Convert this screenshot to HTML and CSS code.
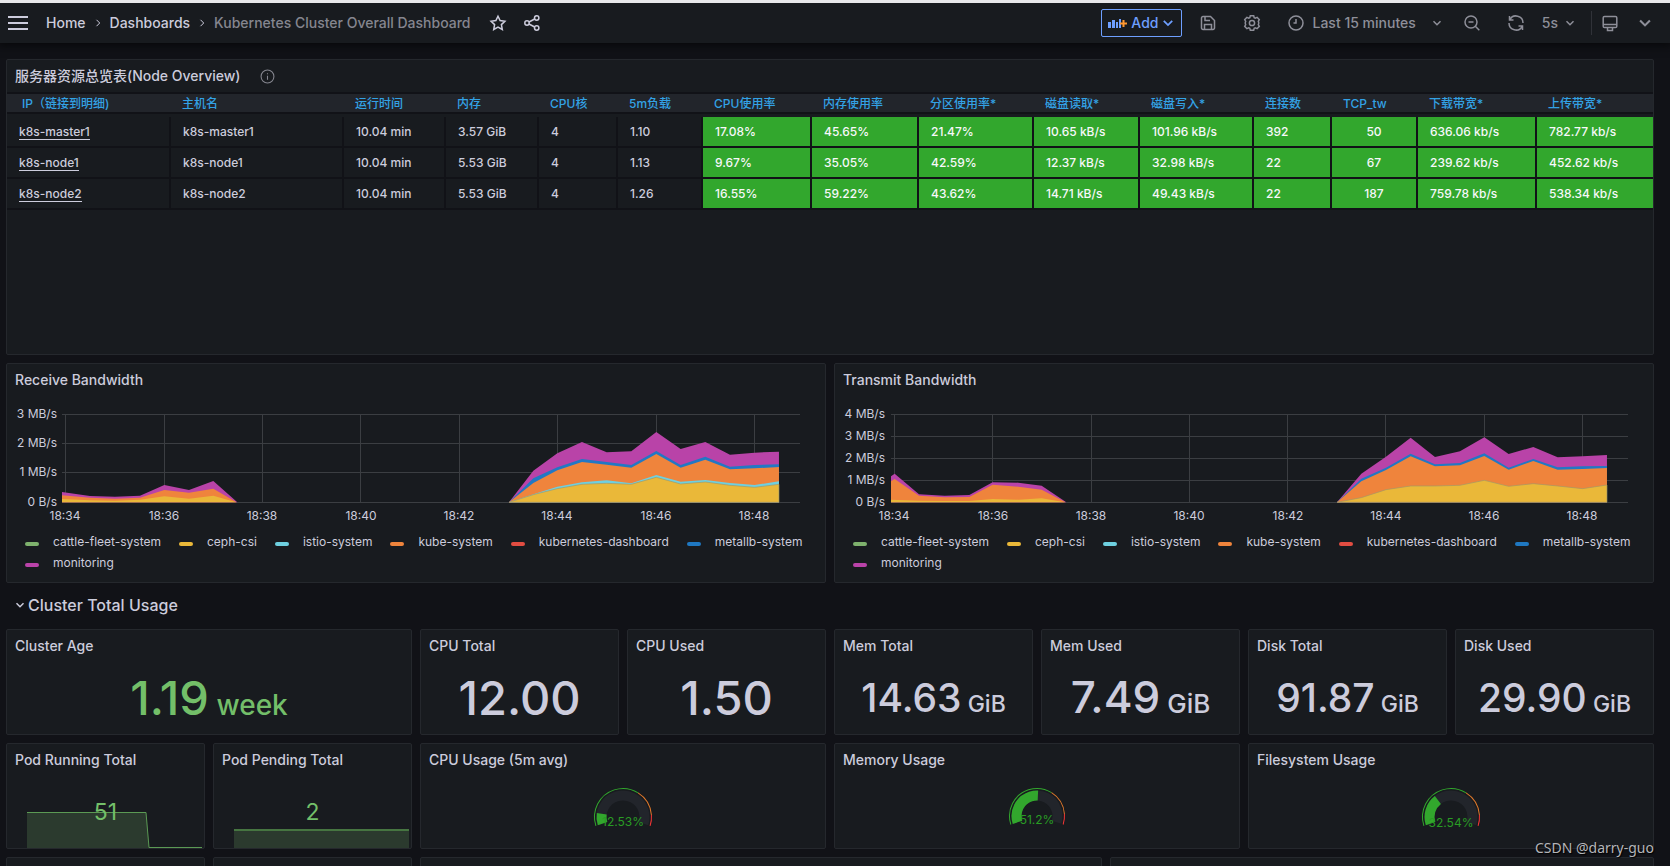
FILE: index.html
```html
<!DOCTYPE html>
<html lang="en">
<head>
<meta charset="utf-8">
<title>Kubernetes Cluster Overall Dashboard</title>
<link rel="stylesheet" href="styles.css">
</head>
<body>
<svg class="defs" aria-hidden="true">
  <symbol id="chev-down" viewBox="0 0 10 10"><path d="M1.5 3.2 5 6.7 8.5 3.2"/></symbol>
  <symbol id="chev-right" viewBox="0 0 10 10"><path d="M3.5 1.8 6.7 5 3.5 8.2"/></symbol>
</svg>
<div class="app">
<header class="topbar">
  <button class="icon-btn menu" aria-label="Menu"><svg width="20" height="16" viewBox="0 0 20 16"><path d="M0 2h20M0 8h20M0 14h20"/></svg></button>
  <nav class="crumbs">
    <a href="#">Home</a>
    <svg class="chev" width="10" height="10"><use href="#chev-right"/></svg>
    <a href="#">Dashboards</a>
    <svg class="chev" width="10" height="10"><use href="#chev-right"/></svg>
    <span class="current">Kubernetes Cluster Overall Dashboard</span>
  </nav>
  <button class="icon-btn light star" aria-label="Star"><svg width="18" height="18" viewBox="0 0 18 18"><path d="M9 2.2l2.1 4.4 4.8.6-3.5 3.4.9 4.9L9 13.1l-4.3 2.4.9-4.9L2.1 7.2l4.8-.6z"/></svg></button>
  <button class="icon-btn light" aria-label="Share"><svg width="18" height="18" viewBox="0 0 18 18"><circle cx="4" cy="9" r="2.2"/><circle cx="13.7" cy="4" r="2.2"/><circle cx="13.7" cy="14" r="2.2"/><path d="M6 8l5.7-3M6 10l5.7 3"/></svg></button>
  <div class="tools">
    <button class="add"><svg class="add-icon" width="19" height="14" viewBox="0 0 19 14"><path class="bars" d="M0 6h3v6H0zM4 4h3v8H4zM8 6h2v6H8zM11 3h2v9h-2z"/><path class="plus" d="M12 7.500h7M15.500 4v7"/></svg>Add<svg class="chev" width="12" height="12"><use href="#chev-down"/></svg></button>
    <button class="icon-btn save" aria-label="Save"><svg width="16" height="18" viewBox="0 0 16 18"><path d="M1.500 4a1.500 1.500 0 0 1 1.500-1.500h7.500l4 4V14a1.500 1.500 0 0 1-1.500 1.500H3A1.500 1.500 0 0 1 1.500 14zM5 2.800v3.700h5M4.500 15.300v-4.800h7v4.800"/></svg></button>
    <button class="icon-btn gear" aria-label="Settings"><svg width="18" height="18" viewBox="0 0 18 18"><circle cx="9" cy="9" r="2.600"/><path d="M7.300 1.800h3.400l.5 1.900 1.100.5 1.800-.9 2.200 2.400-1 1.700.4 1.100v1l-.4 1.100 1 1.700-2.200 2.400-1.800-.9-1.100.5-.5 1.900H7.300l-.5-1.900-1.100-.5-1.800.9-2.200-2.400 1-1.700L2.300 9.500v-1l.4-1.100-1-1.700 2.200-2.400 1.800.9 1.100-.5z"/></svg></button>
    <button class="text-btn time"><svg width="16" height="16" viewBox="0 0 16 16"><circle cx="8" cy="8" r="7"/><path d="M8 4v4H5.500"/></svg>Last 15 minutes<svg class="chev" width="10" height="10"><use href="#chev-down"/></svg></button>
    <button class="icon-btn zoom" aria-label="Zoom out"><svg width="16" height="16" viewBox="0 0 16 16"><circle cx="7" cy="7" r="6"/><path d="M4.500 7h5M11.300 11.300l4 4"/></svg></button>
    <button class="icon-btn refresh" aria-label="Refresh"><svg width="16" height="16" viewBox="0 0 16 16"><path d="M1.500 1v4h4M1.800 4.700A7 7 0 0 1 15 8M14.500 15v-4h-4M14.200 11.300A7 7 0 0 1 1 8"/></svg></button>
    <button class="text-btn interval">5s<svg class="chev" width="10" height="10"><use href="#chev-down"/></svg></button>
    <span class="divider"></span>
    <button class="icon-btn" aria-label="Cycle view mode"><svg width="16" height="17" viewBox="0 0 16 17"><path d="M2.500 1.500h11a1.300 1.300 0 0 1 1.300 1.300v8.400a1.300 1.300 0 0 1-1.300 1.300h-11a1.300 1.300 0 0 1-1.300-1.300V2.800a1.300 1.300 0 0 1 1.300-1.300zM1.200 9.500h13.600M5.500 12.700V15.500h5v-2.800"/></svg></button>
    <button class="icon-btn kiosk" aria-label="Collapse toolbar"><svg class="chev" width="14" height="14"><use href="#chev-down"/></svg></button>
  </div>
</header>

<main class="grid">
  <section class="panel c24 r8">
    <h2>服务器资源总览表(Node Overview)<svg class="info" width="15" height="15" viewBox="0 0 14 14"><circle cx="7" cy="7" r="6"/><path d="M7 6.300v3.700M7 4v1"/></svg></h2>
    <table>
      <colgroup><col class="w164"><col class="w173"><col class="w102"><col class="w93"><col class="w79"><col class="w85"><col class="w109"><col class="w107"><col class="w115"><col class="w106"><col class="w114"><col class="w78"><col class="w86"><col class="w119"><col class="w116"></colgroup>
      <thead><tr><th>IP（链接到明细)</th><th>主机名</th><th>运行时间</th><th>内存</th><th>CPU核</th><th>5m负载</th><th>CPU使用率</th><th>内存使用率</th><th>分区使用率*</th><th>磁盘读取*</th><th>磁盘写入*</th><th>连接数</th><th>TCP_tw</th><th>下载带宽*</th><th>上传带宽*</th></tr></thead>
      <tbody>
        <tr><td><a href="#">k8s-master1</a></td><td>k8s-master1</td><td>10.04 min</td><td>3.57 GiB</td><td>4</td><td>1.10</td><td class="ok">17.08%</td><td class="ok">45.65%</td><td class="ok">21.47%</td><td class="ok">10.65 kB/s</td><td class="ok">101.96 kB/s</td><td class="ok">392</td><td class="ok mid">50</td><td class="ok">636.06 kb/s</td><td class="ok">782.77 kb/s</td></tr>
        <tr><td><a href="#">k8s-node1</a></td><td>k8s-node1</td><td>10.04 min</td><td>5.53 GiB</td><td>4</td><td>1.13</td><td class="ok">9.67%</td><td class="ok">35.05%</td><td class="ok">42.59%</td><td class="ok">12.37 kB/s</td><td class="ok">32.98 kB/s</td><td class="ok">22</td><td class="ok mid">67</td><td class="ok">239.62 kb/s</td><td class="ok">452.62 kb/s</td></tr>
        <tr><td><a href="#">k8s-node2</a></td><td>k8s-node2</td><td>10.04 min</td><td>5.53 GiB</td><td>4</td><td>1.26</td><td class="ok">16.55%</td><td class="ok">59.22%</td><td class="ok">43.62%</td><td class="ok">14.71 kB/s</td><td class="ok">49.43 kB/s</td><td class="ok">22</td><td class="ok mid">187</td><td class="ok">759.78 kb/s</td><td class="ok">538.34 kb/s</td></tr>
      </tbody>
    </table>
  </section>

  <section class="panel c12 r6">
    <h2>Receive Bandwidth</h2>
    <svg class="chart" viewBox="0 0 818 130">
      <path class="lines" d="M55 18.500H793M55 47.500H793M55 76.500H793M55 106.500H793M58.500 18V107M157.500 18V107M255.500 18V107M353.500 18V107M452.500 18V107M550.500 18V107M649.500 18V107M747.500 18V107"/>
      <g transform="translate(-7 -41) scale(.3333)">
        <polygon class="f-mag" points="186,411 270,423 345,425 420,422 493,390 567,405 640,378 712,442 186,442"/>
        <polygon class="f-org" points="186,421 270,428 345,431 420,428 493,405 567,413 640,401 710,442 186,442"/>
        <polygon class="f-yel" points="186,432 270,436 345,437 420,434 493,424 567,431 640,422 709,442 186,442"/>
      </g>
      <g transform="translate(403 -41) scale(.3333)">
        <polygon class="f-mag" points="297,442 370,347 442,295 516,261 590,292 664,289 739,231 812,282 886,261 960,299 1034,293 1107,290 1107,442"/>
        <polygon class="f-blu" points="297,442 370,370 442,337 516,312 590,321 664,330 739,288 812,330 886,305 960,335 1034,330 1107,328 1107,442"/>
        <polygon class="f-org" points="297,442 370,384 442,346 516,321 590,329 664,338 739,297 812,338 886,314 960,343 1034,340 1107,336 1107,442"/>
        <polygon class="f-cya" points="297,442 370,418 442,395 516,382 590,376 664,385 739,360 812,380 886,375 960,384 1034,390 1107,379 1107,442"/>
        <polygon class="f-yel edge" points="297,442 370,419 442,401 516,388 590,385 664,388 739,367 812,387 886,381 960,391 1034,397 1107,388 1107,442"/>
      </g>
      <g class="y-axis"><text x="50" y="22">3 MB/s</text><text x="50" y="51">2 MB/s</text><text x="50" y="80">1 MB/s</text><text x="50" y="110">0 B/s</text></g>
      <g class="x-axis"><text x="58" y="124">18:34</text><text x="157" y="124">18:36</text><text x="255" y="124">18:38</text><text x="354" y="124">18:40</text><text x="452" y="124">18:42</text><text x="550" y="124">18:44</text><text x="649" y="124">18:46</text><text x="747" y="124">18:48</text></g>
    </svg>
    <ul class="legend"><li class="grn">cattle-fleet-system</li><li class="yel">ceph-csi</li><li class="cya">istio-system</li><li class="org">kube-system</li><li class="red">kubernetes-dashboard</li><li class="blu">metallb-system</li><li class="mag">monitoring</li></ul>
  </section>
  <section class="panel c12 r6">
    <h2>Transmit Bandwidth</h2>
    <svg class="chart" viewBox="0 0 818 130">
      <path class="lines" d="M56 18.500H793M56 40.500H793M56 62.500H793M56 84.500H793M56 106.500H793M59.500 18V107M157.500 18V107M256.500 18V107M354.500 18V107M452.500 18V107M550.500 18V107M649.500 18V107M747.500 18V107"/>
      <g transform="translate(-5 -41) scale(.3333)">
        <polygon class="f-mag" points="183,364 194,356 267,418 344,422 418,420 488,382 565,383 635,392 709,442 183,442"/>
        <polygon class="f-org" points="183,379 194,372 267,422 344,427 418,426 488,389 565,395 635,404 707,442 183,442"/>
        <polygon class="f-yel" points="183,434 267,437 344,438 418,438 488,432 565,434 635,430 706,442 183,442"/>
      </g>
      <g transform="translate(405 -41) scale(.3333)">
        <polygon class="f-mag" points="291,442 364,356 438,305 512,248 585,306 660,289 733,247 806,297 880,276 953,307 1028,304 1101,300 1101,442"/>
        <polygon class="f-blu" points="291,442 364,371 438,338 512,296 585,328 660,324 733,295 806,338 880,312 953,337 1028,334 1101,333 1101,442"/>
        <polygon class="f-org" points="291,442 364,379 438,345 512,304 585,334 660,331 733,303 806,344 880,318 953,344 1028,342 1101,339 1101,442"/>
        <polygon class="f-yel edge" points="291,442 364,428 438,404 512,393 585,393 660,391 733,376 806,394 880,386 953,393 1028,401 1101,390 1101,442"/>
      </g>
      <g class="y-axis"><text x="50" y="22">4 MB/s</text><text x="50" y="44">3 MB/s</text><text x="50" y="66">2 MB/s</text><text x="50" y="88">1 MB/s</text><text x="50" y="110">0 B/s</text></g>
      <g class="x-axis"><text x="59" y="124">18:34</text><text x="158" y="124">18:36</text><text x="256" y="124">18:38</text><text x="354" y="124">18:40</text><text x="453" y="124">18:42</text><text x="551" y="124">18:44</text><text x="649" y="124">18:46</text><text x="747" y="124">18:48</text></g>
    </svg>
    <ul class="legend"><li class="grn">cattle-fleet-system</li><li class="yel">ceph-csi</li><li class="cya">istio-system</li><li class="org">kube-system</li><li class="red">kubernetes-dashboard</li><li class="blu">metallb-system</li><li class="mag">monitoring</li></ul>
  </section>

  <button class="row-title c24"><svg class="chev" width="10" height="10"><use href="#chev-down"/></svg>Cluster Total Usage</button>

  <section class="panel c6 r3"><h2>Cluster Age</h2><div class="stat xl green"><p>1.19<small>&nbsp;week</small></p></div></section>
  <section class="panel c3 r3"><h2>CPU Total</h2><div class="stat xl"><p>12.00</p></div></section>
  <section class="panel c3 r3"><h2>CPU Used</h2><div class="stat xl"><p>1.50</p></div></section>
  <section class="panel c3 r3"><h2>Mem Total</h2><div class="stat md"><p>14.63<small>&nbsp;GiB</small></p></div></section>
  <section class="panel c3 r3"><h2>Mem Used</h2><div class="stat lg"><p>7.49<small>&nbsp;GiB</small></p></div></section>
  <section class="panel c3 r3"><h2>Disk Total</h2><div class="stat md"><p>91.87<small>&nbsp;GiB</small></p></div></section>
  <section class="panel c3 r3"><h2>Disk Used</h2><div class="stat md"><p>29.90<small>&nbsp;GiB</small></p></div></section>

  <section class="panel c3 r3"><h2>Pod Running Total</h2><div class="stat sm green"><svg class="spark" viewBox="0 0 197 72" preserveAspectRatio="none"><path class="area" d="M20 36.500H139L142 71.500H195V72H20z"/><path class="line" d="M20 36.500H139L142 71.500H195"/></svg><p>51</p></div></section>
  <section class="panel c3 r3"><h2>Pod Pending Total</h2><div class="stat sm green"><svg class="spark" viewBox="0 0 197 72" preserveAspectRatio="none"><path class="area" d="M20 54H195V72H20z"/><path class="line thick" d="M20 54H195"/></svg><p>2</p></div></section>
  <section class="panel c6 r3"><h2>CPU Usage (5m avg)</h2>
    <svg class="gauge" width="80" height="72" viewBox="0 0 80 72">
      <g transform="translate(40 41)"><circle class="track" r="21.500" pathLength="360" stroke-dasharray="216 360" transform="rotate(162)"/><circle class="value" r="21.500" pathLength="360" stroke-dasharray="27 360" transform="rotate(162)"/><circle class="ring g" r="28.500" pathLength="360" stroke-dasharray="140 360" transform="rotate(162)"/><circle class="ring o" r="28.500" pathLength="360" stroke-dasharray="54 360" transform="rotate(302)"/><circle class="ring r" r="28.500" pathLength="360" stroke-dasharray="22 360" transform="rotate(356)"/></g>
      <text x="40" y="50">12.53%</text>
    </svg></section>
  <section class="panel c6 r3"><h2>Memory Usage</h2>
    <svg class="gauge" width="80" height="72" viewBox="0 0 80 72">
      <g transform="translate(40 40)"><circle class="track" r="20.500" pathLength="360" stroke-dasharray="216 360" transform="rotate(162)"/><circle class="value" r="20.500" pathLength="360" stroke-dasharray="110.600 360" transform="rotate(162)"/><circle class="ring g" r="27.500" pathLength="360" stroke-dasharray="140 360" transform="rotate(162)"/><circle class="ring o" r="27.500" pathLength="360" stroke-dasharray="54 360" transform="rotate(302)"/><circle class="ring r" r="27.500" pathLength="360" stroke-dasharray="22 360" transform="rotate(356)"/></g>
      <text x="40" y="48">51.2%</text>
    </svg></section>
  <section class="panel c6 r3"><h2>Filesystem Usage</h2>
    <svg class="gauge" width="80" height="72" viewBox="0 0 80 72">
      <g transform="translate(40 41)"><circle class="track" r="21.500" pathLength="360" stroke-dasharray="216 360" transform="rotate(162)"/><circle class="value" r="21.500" pathLength="360" stroke-dasharray="70.300 360" transform="rotate(162)"/><circle class="ring g" r="28.500" pathLength="360" stroke-dasharray="140 360" transform="rotate(162)"/><circle class="ring o" r="28.500" pathLength="360" stroke-dasharray="54 360" transform="rotate(302)"/><circle class="ring r" r="28.500" pathLength="360" stroke-dasharray="22 360" transform="rotate(356)"/></g>
      <text x="40" y="51">32.54%</text>
    </svg></section>

  <section class="panel c3"></section>
  <section class="panel c3"></section>
  <section class="panel c10"></section>
  <section class="panel c8"></section>
</main>
<span class="watermark">CSDN @darry-guo</span>
</div>
</body>
</html>
```
FILE: styles.css
```css
* { box-sizing: border-box; }
body { margin: 0; background: #111217; color: #ccccdc; font: 14px/20px Inter, "Noto Sans CJK SC", sans-serif; }
h2, p, ul { margin: 0; padding: 0; }
a { color: inherit; text-decoration: none; }
button { margin: 0; padding: 0; border: 0; background: none; color: inherit; font: inherit; display: flex; align-items: center; }
svg { fill: none; stroke: currentColor; stroke-width: 1.5; flex: none; }
svg text { stroke: none; fill: currentColor; }
.defs { position: absolute; width: 0; height: 0; }
.app { position: relative; height: 100vh; overflow: hidden; }

.topbar { display: flex; align-items: center; height: 43px; padding: 0 18px 0 8px; border-top: 3px solid #e8e8ea; background: #181b1f; box-shadow: 0 1px 8px 2px #08090b; font-weight: 500; }
.menu svg { stroke-width: 2; }
.crumbs { display: flex; align-items: center; gap: 7px; margin-left: 18px; }
.crumbs .current { color: #85868f; }
.crumbs .chev { stroke-width: 1; }
.star { margin-left: 18px; }
.light { margin-right: 16px; }
.tools { display: flex; align-items: center; margin-left: auto; color: #8e8f99; }
.add { height: 28px; gap: 4px; padding: 0 7px 0 6px; border: 1px solid #6e9fff; border-radius: 2px; color: #6e9fff; }
.add-icon .bars { fill: #6e9fff; stroke: none; }
.add-icon .plus { stroke: #ff9830; stroke-width: 2; }
.save { margin-left: 18px; }
.gear { margin-left: 27px; }
.time { margin-left: 27px; gap: 8px; }
.time .chev { margin-left: 8px; }
.zoom { margin-left: 22px; }
.refresh { margin-left: 28px; }
.interval { margin-left: 18px; gap: 7px; }
.divider { width: 1px; height: 24px; margin: 0 10px 0 16px; background: #303238; }
.kiosk { margin-left: 20px; }

.grid { display: grid; grid-template-columns: repeat(24, minmax(0, 1fr)); grid-auto-rows: minmax(30px, auto); gap: 8px; padding: 16px 16px 0 6px; }
.c24 { grid-column: span 24; }
.c12 { grid-column: span 12; }
.c10 { grid-column: span 10; }
.c8 { grid-column: span 8; }
.c6 { grid-column: span 6; }
.c3 { grid-column: span 3; }
.r8 { grid-row: span 8; }
.r6 { grid-row: span 6; }
.r3 { grid-row: span 3; }
.panel { display: flex; flex-direction: column; background: #181b1f; border: 1px solid #25282d; border-radius: 2px; }
.panel h2 { display: flex; align-items: center; height: 32px; padding: 0 8px; font-size: 14px; font-weight: 500; }
.info { margin-left: 19px; color: #85868f; stroke-width: 1; }

table { width: 100%; table-layout: fixed; border-collapse: separate; border-spacing: 0; font-size: 12px; font-weight: 500; line-height: 18px; }
th { height: 22px; padding: 2px 0 0 11px; line-height: 16px; text-align: left; font-weight: 500; white-space: nowrap; color: #33a2e5; background: #22252b; border: solid #111217; border-width: 2px 0; }
th:first-child { padding-left: 15px; }
tbody::before { content: ""; display: table-row; height: 3px; }
td { height: 31px; padding: 0 0 0 12px; border: solid #111217; border-width: 0 2px 2px 0; white-space: nowrap; }
td:last-child { border-right: 0; }
td a { border-bottom: 1px solid #ccccdc; }
.ok { background: #32a72d; color: #f7f8fa; }
.mid { padding: 0; text-align: center; }
.w164 { width: 164px; }
.w173 { width: 173px; }
.w102 { width: 102px; }
.w93 { width: 93px; }
.w79 { width: 79px; }
.w85 { width: 85px; }
.w109 { width: 109px; }
.w107 { width: 107px; }
.w115 { width: 115px; }
.w106 { width: 106px; }
.w114 { width: 114px; }
.w78 { width: 78px; }
.w86 { width: 86px; }
.w119 { width: 119px; }
.w116 { width: 116px; }

.chart { width: 100%; font-size: 12px; }
.lines { stroke: #3b3e42; stroke-width: 1; }
.y-axis { text-anchor: end; }
.x-axis { text-anchor: middle; }
polygon { stroke: none; }
.f-mag { fill: #b943a8; }
.f-blu { fill: #2278c4; }
.f-org { fill: #ef843c; }
.f-cya { fill: #6ed0e0; }
.f-yel { fill: #eab839; }
.edge { stroke: #a09868; stroke-width: 2; }
.legend { display: flex; flex-wrap: wrap; column-gap: 18px; padding: 5px 8px 0 18px; list-style: none; font-size: 12px; line-height: 21px; }
.legend li { display: flex; align-items: center; gap: 14px; }
.legend li::before { content: ""; width: 14px; height: 4px; margin-top: 4px; border-radius: 2px; background: var(--c); }
.grn { --c: #7eb26d; }
.yel { --c: #eab839; }
.cya { --c: #6ed0e0; }
.org { --c: #ef843c; }
.red { --c: #e24d42; }
.blu { --c: #1f78c1; }
.mag { --c: #ba43a9; }

.row-title { gap: 3px; padding: 0 0 2px 9px; font-size: 16px; font-weight: 500; }

.stat { position: relative; display: flex; flex: 1; align-items: center; justify-content: center; font-weight: 500; line-height: 1; }
.stat p { position: relative; }
.xl, .lg, .md { padding-bottom: 2px; }
.xl { font-size: 47px; }
.lg { font-size: 44px; }
.md { font-size: 39px; }
.sm { font-size: 23px; font-weight: 400; }
.xl small { font-size: 28px; }
.lg small { font-size: 26px; }
.md small { font-size: 23px; }
.green { color: #73bf69; }
.spark { position: absolute; inset: 0; width: 100%; height: 100%; }
.area { fill: #2b3a2e; stroke: none; }
.line { stroke: #5b9a54; stroke-width: 1; }
.thick { stroke: #467541; stroke-width: 2; }

.gauge { align-self: center; font-size: 12px; color: #299c24; }
.gauge text { text-anchor: middle; }
.track { stroke: #22252b; stroke-width: 10; }
.value { stroke: #32a72d; stroke-width: 10; }
.ring { stroke-width: 1; }
.g { stroke: #32a72d; }
.o { stroke: #e0792b; }
.r { stroke: #f53636; }

.watermark { position: absolute; right: 16px; bottom: 7px; font: 14px/22px "Noto Sans", sans-serif; color: #b4b5b9; text-shadow: 1px 1px 1px #000; }
```
